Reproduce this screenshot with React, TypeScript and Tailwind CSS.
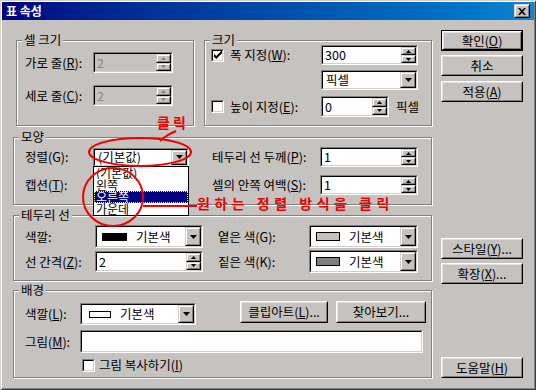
import React from "react";

type P = { className?: string; children?: React.ReactNode };

function Sunken({ className = "", inner = "bg-white", children }: P & { inner?: string }) {
  return (
    <div className={`border border-t-[#808080] border-l-[#808080] border-r-white border-b-white ${className}`}>
      <div className={`flex h-full items-center border border-t-black border-l-black border-r-[#d4d0c8] border-b-[#d4d0c8] ${inner}`}>
        {children}
      </div>
    </div>
  );
}

function Bevel({ className = "", children }: P) {
  return (
    <div className={`border border-t-[#d4d0c8] border-l-[#d4d0c8] border-r-black border-b-black bg-[#c5c2bf] ${className}`}>
      <div className="flex h-full items-center justify-center border border-t-white border-l-white border-r-[#808080] border-b-[#808080]">
        {children}
      </div>
    </div>
  );
}

function Down() {
  return (
    <svg width="7" height="4" viewBox="0 0 7 4">
      <path d="M0 0h7L3.5 4z" fill="#000" />
    </svg>
  );
}

function Spin({ disabled }: { disabled?: boolean }) {
  const c = disabled ? "#808080" : "#000";
  return (
    <div className="flex h-full w-[15px] shrink-0 flex-col">
      <Bevel className="flex-1">
        <svg width="5" height="3" viewBox="0 0 5 3">
          <path d="M2.5 0L5 3H0z" fill={c} />
        </svg>
      </Bevel>
      <Bevel className="flex-1">
        <svg width="5" height="3" viewBox="0 0 5 3">
          <path d="M0 0h5L2.5 3z" fill={c} />
        </svg>
      </Bevel>
    </div>
  );
}

function NumField({ value, className = "", disabled }: { value: string; className?: string; disabled?: boolean }) {
  return (
    <Sunken className={className} inner={disabled ? "bg-[#c5c2bf]" : "bg-white"}>
      <span className={`flex-1 pl-[2px] ${disabled ? "text-[#8a8a8a]" : "text-black"}`}>{value}</span>
      <Spin disabled={disabled} />
    </Sunken>
  );
}

function Select({ className = "", children }: P) {
  return (
    <Sunken className={className}>
      <div className="flex h-full flex-1 items-center pl-[3px]">{children}</div>
      <Bevel className="h-full w-[16px] shrink-0">
        <Down />
      </Bevel>
    </Sunken>
  );
}

function Check({ checked }: { checked?: boolean }) {
  return (
    <Sunken className="h-[13px] w-[13px] shrink-0">
      {checked && (
        <svg width="9" height="9" viewBox="0 0 7 7" className="ml-[1px]">
          <path d="M0 2l2 2 5-5v2.5L2 6.5 0 4.5z" fill="#000" />
        </svg>
      )}
    </Sunken>
  );
}

function Btn({ className = "", children, def }: P & { def?: boolean }) {
  const face = (
    <div className="h-full border border-t-white border-l-white border-r-black border-b-black">
      <div className="flex h-full items-center justify-center border border-t-[#dfdfdf] border-l-[#dfdfdf] border-r-[#808080] border-b-[#808080] bg-[#c5c2bf]">
        {children}
      </div>
    </div>
  );
  if (def) return <div className={`border border-black ${className}`}>{face}</div>;
  return <div className={className}>{face}</div>;
}

function Group({ title, className = "", children, lx = "left-[5px]" }: P & { title: string; lx?: string }) {
  return (
    <div className={`relative border border-[#808080] shadow-[1px_1px_0_#ffffff,inset_1px_1px_0_#ffffff] ${className}`}>
      <span className={`absolute top-[-8px] bg-[#c5c2bf] px-[2px] leading-[14px] ${lx}`}>{title}</span>
      {children}
    </div>
  );
}

function Swatch({ cls }: { cls: string }) {
  return <span className={`mr-[9px] inline-block ${cls}`} />;
}

export default function App() {
  return (
    <div className="relative h-[390px] w-[536px] overflow-hidden bg-[#c5c2bf] p-[2px] font-['Noto_Sans_CJK_KR','Noto_Sans',sans-serif] text-[12.5px] leading-[14px] text-black shadow-[inset_1px_1px_0_#d4d0c8,inset_-1px_-1px_0_#404040,inset_2px_2px_0_#ffffff,inset_-2px_-2px_0_#808080]">
      {/* Title bar */}
      <div className="flex h-[18px] items-center justify-between bg-linear-to-r from-[#000080] to-[#1084d0] pl-[4px] pr-[4px]">
        <span className="text-[12px] font-bold text-white">표 속성</span>
        <Bevel className="h-[14px] w-[16px]">
          <svg width="8" height="7" viewBox="0 0 8 7">
            <path d="M0 0h2l2 2.2L6 0h2L5 3.5 8 7H6L4 4.8 2 7H0l3-3.5z" fill="#000" />
          </svg>
        </Bevel>
      </div>

      <div className="flex pl-[11px]">
        {/* Left column */}
        <div className="mt-[20px] flex w-[419px] flex-col">
          <div className="flex gap-[10px] pl-[3px]">
            <Group title="셀 크기" className="h-[86px] w-[178px]">
              <div className="flex flex-col gap-[12px] pl-[8px] pt-[11px]">
                <div className="flex items-center">
                  <span className="w-[68px]">가로 줄(<u>R</u>):</span>
                  <NumField value="2" disabled className="h-[21px] w-[80px]" />
                </div>
                <div className="flex items-center">
                  <span className="w-[68px]">세로 줄(<u>C</u>):</span>
                  <NumField value="2" disabled className="h-[21px] w-[80px]" />
                </div>
              </div>
            </Group>
            <Group title="크기" className="h-[86px] w-[228px]">
              <div className="flex flex-col pl-[6px] pt-[4px]">
                <div className="flex h-[20px] items-center">
                  <div className="flex w-[110px] items-center gap-[6px]">
                    <Check checked />
                    <span>폭 지정(<u>W</u>):</span>
                  </div>
                  <NumField value="300" className="h-[20px] w-[97px]" />
                </div>
                <div className="mt-[5px] flex h-[20px] items-center">
                  <div className="w-[110px]" />
                  <Select className="h-[20px] w-[97px]">픽셀</Select>
                </div>
                <div className="mt-[6px] flex h-[21px] items-center">
                  <div className="flex w-[110px] items-center gap-[6px]">
                    <Check />
                    <span>높이 지정(<u>E</u>):</span>
                  </div>
                  <NumField value="0" className="h-[21px] w-[68px]" />
                  <span className="ml-[7px]">픽셀</span>
                </div>
              </div>
            </Group>
          </div>

          <Group title="모양" className="mt-[11px] h-[68px]">
            <div className="flex flex-col gap-[8px] pl-[11px] pt-[9px]">
              <div className="flex h-[20px] items-center">
                <span className="w-[68px]">정렬(G):</span>
                <Select className="h-[19px] w-[96px]">(기본값)</Select>
                <span className="ml-[23px] w-[108px]">테두리 선 두께(<u>P</u>):</span>
                <NumField value="1" className="h-[20px] w-[98px]" />
              </div>
              <div className="flex h-[20px] items-center">
                <span className="w-[68px]">캡션(<u>T</u>):</span>
                <Select className="h-[19px] w-[96px]" />
                <span className="ml-[23px] w-[108px]">셀의 안쪽 여백(<u>S</u>):</span>
                <NumField value="1" className="h-[20px] w-[98px]" />
              </div>
            </div>
          </Group>

          <Group title="테두리 선" className="mt-[10px] h-[66px]">
            <div className="flex flex-col gap-[2px] pl-[11px] pt-[9px]">
              <div className="flex h-[23px] items-center">
                <span className="w-[70px]">색깔:</span>
                <Select className="h-[23px] w-[108px]">
                  <Swatch cls="ml-[2px] h-[8px] w-[25px] bg-black" />
                  <span>기본색</span>
                </Select>
                <span className="ml-[15px] w-[91px]">옅은 색(G):</span>
                <Select className="h-[23px] w-[109px]">
                  <Swatch cls="ml-[2px] h-[9px] w-[24px] border border-black bg-[#c5c2bf]" />
                  <span>기본색</span>
                </Select>
              </div>
              <div className="flex h-[23px] items-center">
                <span className="w-[70px]">선 간격(<u>Z</u>):</span>
                <NumField value="2" className="h-[21px] w-[108px]" />
                <span className="ml-[15px] w-[91px]">짙은 색(K):</span>
                <Select className="h-[23px] w-[109px]">
                  <Swatch cls="ml-[2px] h-[9px] w-[24px] border border-black bg-[#808080]" />
                  <span>기본색</span>
                </Select>
              </div>
            </div>
          </Group>

          <Group title="배경" className="mt-[9px] h-[88px]">
            <div className="flex flex-col pl-[11px] pt-[10px]">
              <div className="flex items-start">
                <span className="mt-[6px] w-[55px]">색깔(<u>L</u>):</span>
                <Select className="mt-[2px] h-[22px] w-[116px]">
                  <Swatch cls="ml-[4px] h-[7px] w-[22px] border border-black bg-white" />
                  <span>기본색</span>
                </Select>
                <Btn className="ml-[44px] h-[22px] w-[88px]">
                  클립아트(<u>L</u>)...
                </Btn>
                <Btn className="ml-[8px] h-[22px] w-[90px]">찾아보기...</Btn>
              </div>
              <div className="mt-[5px] flex items-center">
                <span className="w-[55px]">그림(<u>M</u>):</span>
                <Sunken className="h-[23px] w-[343px]" />
              </div>
              <div className="mt-[5px] flex items-center pl-[57px]">
                <Check />
                <span className="ml-[4px]">그림 복사하기(<u>I</u>)</span>
              </div>
            </div>
          </Group>
        </div>

        {/* Right column */}
        <div className="ml-[9px] mt-[10px] flex w-[82px] flex-col">
          <Btn def className="h-[21px]">
            확인(<u>O</u>)
          </Btn>
          <Btn className="mt-[4px] h-[21px]">취소</Btn>
          <Btn className="mt-[5px] h-[21px]">
            적용(<u>A</u>)
          </Btn>
          <Btn className="mt-[136px] h-[21px]">
            스타일(<u>Y</u>)...
          </Btn>
          <Btn className="mt-[4px] h-[21px]">
            확장(<u>X</u>)...
          </Btn>
          <Btn className="mt-[73px] h-[21px]">
            도움말(<u>H</u>)
          </Btn>
        </div>
      </div>

      {/* Dropdown list (open) */}
      <div className="absolute left-[93px] top-[166px] flex w-[96px] flex-col border border-black bg-white text-[12px]">
        <div className="h-[12px] overflow-hidden pl-[2px] leading-[12px]">(기본값)</div>
        <div className="h-[12px] overflow-hidden pl-[2px] leading-[12px]">왼쪽</div>
        <div className="h-[12px] overflow-hidden border border-dotted border-[#ffff80] bg-[#000080] pl-[1px] leading-[10px] text-white">오른쪽</div>
        <div className="h-[12px] overflow-hidden pl-[2px] leading-[12px]">가운데</div>
      </div>

      {/* Red annotations */}
      <svg className="pointer-events-none absolute left-0 top-0" width="536" height="390" viewBox="0 0 536 390">
        <ellipse cx="140" cy="152" rx="51" ry="14" fill="none" stroke="#f00000" strokeWidth="2" />
        <path d="M176 131 Q168 134 160 141" fill="none" stroke="#f00000" strokeWidth="2" />
        <ellipse cx="113" cy="197" rx="30" ry="29" fill="none" stroke="#f00000" strokeWidth="2" />
        <line x1="143" y1="206" x2="197" y2="206" stroke="#f00000" strokeWidth="2" />
      </svg>
      <span className="absolute left-[157px] top-[114px] text-[14px] font-bold leading-[16px] tracking-[3px] text-[#f00000]">클릭</span>
      <span className="absolute left-[197px] top-[195px] text-[14px] font-bold leading-[16px] tracking-[4.5px] text-[#f00000]">원하는 정렬 방식을 클릭</span>
    </div>
  );
}
